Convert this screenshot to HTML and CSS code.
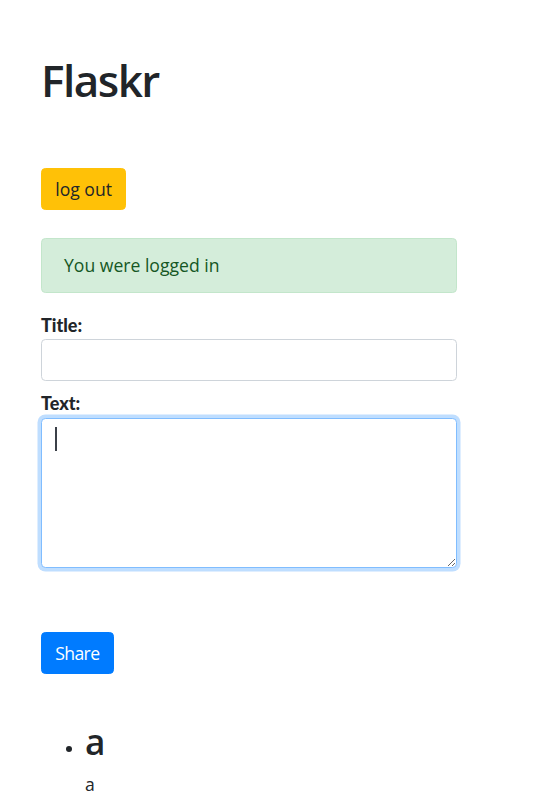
FILE: index.html
```html
<!DOCTYPE html>
<html lang="en">
<head>
<meta charset="utf-8">
<title>Flaskr</title>
<link rel="stylesheet" href="styles.css">
</head>
<body>
<div class="container">
  <h1 class="title">Flaskr</h1>
  <a class="btn btn-warning">log out</a>
  <div class="alert">You were logged in</div>
  <form class="entry-form">
    <label class="form-label">Title:</label>
    <input class="form-control input-title" type="text">
    <label class="form-label">Text:</label>
    <div class="textarea-wrap">
      <textarea class="form-control textarea focused"></textarea>
      <span class="caret"></span>
    </div>
    <button type="button" class="btn btn-primary share">Share</button>
  </form>
  <ul class="entries">
    <li><h2 class="entry-title">a</h2><div class="entry-text">a</div></li>
  </ul>
</div>
</body>
</html>
```
FILE: styles.css
```css
html, body {
  margin: 0;
  padding: 0;
  background: #fff;
}
body {
  font-family: "Open Sans", "Noto Sans", sans-serif;
  font-size: 17.6px;
  line-height: 1.5;
  color: #212529;
}
.container {
  width: 416px;
  padding: 54px 41px 0;
}
.title {
  font-size: 44px;
  font-weight: 600;
  line-height: 1.2;
  letter-spacing: -1.5px;
  margin: 0 0 61px;
}
.btn {
  display: inline-block;
  box-sizing: border-box;
  font-family: "Open Sans", "Noto Sans", sans-serif;
  font-size: 17.6px;
  line-height: 1.5;
  padding: 7.1px 13.2px;
  border: 1px solid transparent;
  border-radius: 4.4px;
  cursor: pointer;
}
.btn-warning {
  background: #ffc107;
  border-color: #ffc107;
  color: #212529;
  align-self: flex-start;
}
.btn-primary {
  background: #007bff;
  border-color: #007bff;
  color: #fff;
}
.alert {
  margin: 27.2px 0 18.6px;
  padding: 13.5px 22px;
  border: 1px solid #c3e6cb;
  border-radius: 4.4px;
  background: #d4edda;
  color: #155724;
}
.entry-form {
  display: flex;
  flex-direction: column;
  align-items: flex-start;
}
.form-label {
  display: block;
  font-family: Lato, "Open Sans", sans-serif;
  font-weight: 900;
  font-size: 18px;
  line-height: 26.4px;
  margin: 0;
}
.form-control {
  display: block;
  box-sizing: border-box;
  width: 416px;
  border: 1px solid #ced4da;
  border-radius: 4.4px;
  background: #fff;
  font-family: "Open Sans", sans-serif;
  font-size: 17.6px;
  color: #495057;
  padding: 6.6px 13.2px;
  margin: 0;
}
.input-title {
  height: 42px;
  margin: 0.6px 0 9px;
}
.textarea-wrap {
  position: relative;
  margin-top: 1.6px;
}
.textarea {
  height: 150px;
  outline: none;
}
.textarea.focused {
  border-color: #80bdff;
  box-shadow: 0 0 0 3.5px rgba(0, 123, 255, 0.25);
}
.caret {
  position: absolute;
  left: 14px;
  top: 9px;
  width: 2px;
  height: 24px;
  background: #3b4048;
}
.share {
  margin-top: 64px;
  letter-spacing: -0.6px;
}
.entries {
  margin: 46px 0 0;
  padding-left: 44px;
}
.entry-title {
  font-size: 35.2px;
  font-weight: 600;
  line-height: 1.2;
  margin: 0 0 8.5px;
}
.entry-text {
  line-height: 1.5;
}
```
